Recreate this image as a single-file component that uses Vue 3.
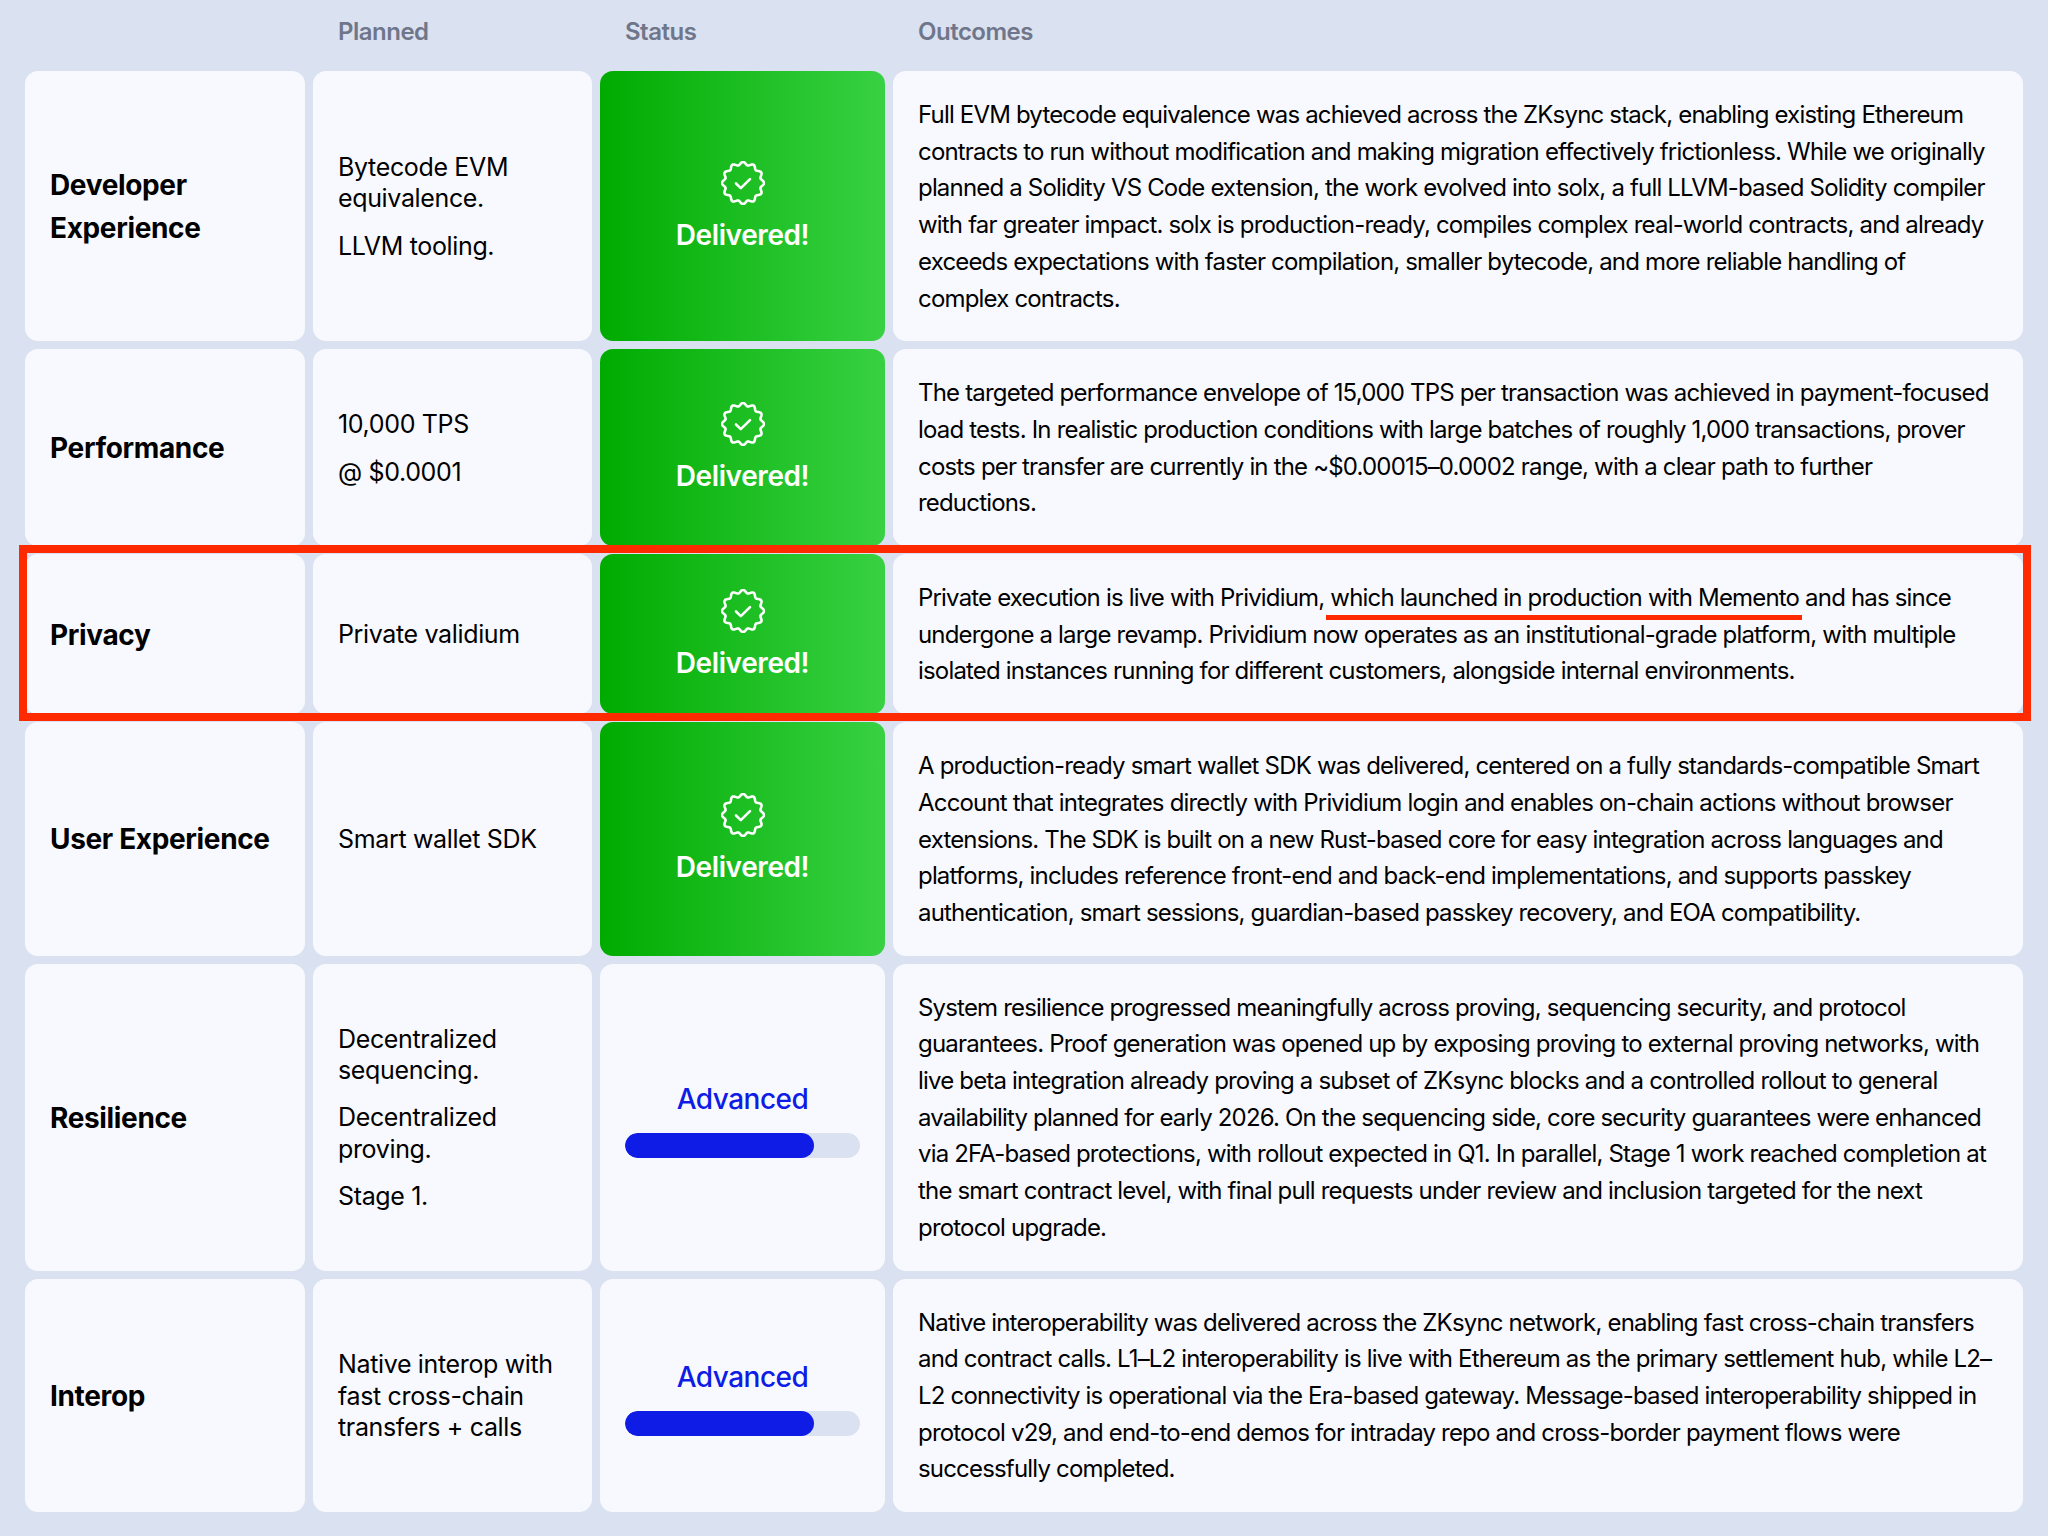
<script setup>
const pts = []
const N = 240
for (let i = 0; i < N; i++) {
  const t = (i / N) * Math.PI * 2
  const r = 19.6 + 1.5 * Math.cos(12 * t)
  pts.push((22 + r * Math.sin(t)).toFixed(2) + ' ' + (22 - r * Math.cos(t)).toFixed(2))
}
const badge = 'M' + pts.join('L') + 'Z'

const rows = [
  { name: ['Developer', 'Experience'], planned: ['Bytecode EVM equivalence.', 'LLVM tooling.'], done: true,
    text: 'Full EVM bytecode equivalence was achieved across the ZKsync stack, enabling existing Ethereum contracts to run without modification and making migration effectively frictionless. While we originally planned a Solidity VS Code extension, the work evolved into solx, a full LLVM-based Solidity compiler with far greater impact. solx is production-ready, compiles complex real-world contracts, and already exceeds expectations with faster compilation, smaller bytecode, and more reliable handling of complex contracts.' },
  { name: ['Performance'], planned: ['10,000 TPS', '@ $0.0001'], done: true,
    text: 'The targeted performance envelope of 15,000 TPS per transaction was achieved in payment-focused load tests. In realistic production conditions with large batches of roughly 1,000 transactions, prover costs per transfer are currently in the ~$0.00015–0.0002 range, with a clear path to further\nreductions.' },
  { name: ['Privacy'], planned: ['Private validium'], done: true, highlight: true,
    before: 'Private execution is live with Prividium, ', mark: 'which launched in production with Memento',
    text: ' and has since undergone a large revamp. Prividium now operates as an institutional-grade platform, with multiple isolated instances running for different customers, alongside internal environments.' },
  { name: ['User Experience'], planned: ['Smart wallet SDK'], done: true,
    text: 'A production-ready smart wallet SDK was delivered, centered on a fully standards-compatible Smart Account that integrates directly with Prividium login and enables on-chain actions without browser extensions. The SDK is built on a new Rust-based core for easy integration across languages and platforms, includes reference front-end and back-end implementations, and supports passkey authentication, smart sessions, guardian-based passkey recovery, and EOA compatibility.' },
  { name: ['Resilience'], planned: ['Decentralized sequencing.', 'Decentralized proving.', 'Stage 1.'], done: false,
    text: 'System resilience progressed meaningfully across proving, sequencing security, and protocol guarantees. Proof generation was opened up by exposing proving to external proving networks, with live beta integration already proving a subset of ZKsync blocks and a controlled rollout to general availability planned for early 2026. On the sequencing side, core security guarantees were enhanced via 2FA-based protections, with rollout expected in Q1. In parallel, Stage 1 work reached completion at the smart contract level, with final pull requests under review and inclusion targeted for the next protocol upgrade.' },
  { name: ['Interop'], planned: ['Native interop with fast cross-chain transfers + calls'], done: false,
    text: 'Native interoperability was delivered across the ZKsync network, enabling fast cross-chain transfers and contract calls. L1–L2 interoperability is live with Ethereum as the primary settlement hub, while L2–L2 connectivity is operational via the Era-based gateway. Message-based interoperability shipped in protocol v29, and end-to-end demos for intraday repo and cross-border payment flows were successfully completed.' }
]
</script>

<template>
  <div class="page">
    <div class="row head">
      <div></div>
      <div class="h">Planned</div>
      <div class="h">Status</div>
      <div class="h">Outcomes</div>
    </div>
    <div v-for="r in rows" :key="r.name[0]" class="row" :class="{ hl: r.highlight }">
      <div class="cell name"><div v-for="n in r.name" :key="n">{{ n }}</div></div>
      <div class="cell planned"><p v-for="p in r.planned" :key="p">{{ p }}</p></div>
      <div v-if="r.done" class="cell status done">
        <svg width="44" height="44" viewBox="0 0 44 44" fill="none" stroke="#fff" stroke-width="2.6" stroke-linecap="round" stroke-linejoin="round">
          <path :d="badge" />
          <path d="M15 22.5l4.8 4.6 9.2-9" />
        </svg>
        <span>Delivered!</span>
      </div>
      <div v-else class="cell status adv">
        <span>Advanced</span>
        <div class="bar"><div class="fill"></div></div>
      </div>
      <div class="cell outcome"><template v-if="r.mark">{{ r.before }}<span class="mark">{{ r.mark }}</span></template>{{ r.text }}</div>
    </div>
  </div>
</template>

<style>
html, body { margin: 0; background: #dae1f0; }
</style>

<style scoped>
.page {
  width: 2048px;
  min-height: 1536px;
  box-sizing: border-box;
  padding: 0 25px;
  background: #dae1f0;
  display: flex;
  flex-direction: column;
  gap: 8px;
  font-family: Inter, "Liberation Sans", sans-serif;
  color: #000;
}
.row {
  display: grid;
  grid-template-columns: 280px 279px 285px 1fr;
  gap: 8px;
  position: relative;
}
.head { height: 63px; align-items: center; }
.h {
  font-size: 24px;
  font-weight: 600;
  color: #70768a;
  padding-left: 25px;
  letter-spacing: -0.5px;
}
.cell {
  background: #f8f9fe;
  border-radius: 13px;
  box-sizing: border-box;
  padding: 25px;
  display: flex;
  flex-direction: column;
  justify-content: center;
}
.name {
  font-size: 28px;
  font-weight: 700;
  line-height: 43px;
  letter-spacing: -0.35px;
  padding-top: 26px;
  padding-bottom: 24px;
}
.planned {
  font-size: 25px;
  line-height: 31.4px;
  gap: 16px;
  letter-spacing: -0.35px;
  padding-top: 26px;
  padding-bottom: 24px;
}
.planned p { margin: 0; }
.status { align-items: center; }
.done {
  background: linear-gradient(90deg, #00ab00, #38d143);
  color: #fff;
  font-size: 28px;
  font-weight: 600;
  gap: 13px;
  letter-spacing: -0.4px;
}
.adv {
  color: #0f1ce6;
  font-size: 28px;
  font-weight: 500;
  gap: 17px;
  letter-spacing: -0.5px;
  padding-top: 30px;
}
.bar {
  width: 100%;
  height: 25px;
  border-radius: 13px;
  background: #dae1f0;
  overflow: hidden;
}
.fill {
  width: 80.5%;
  height: 100%;
  border-radius: 13px;
  background: #0f1ce6;
}
.outcome {
  display: block;
  font-size: 24px;
  line-height: 36.7px;
  letter-spacing: -0.82px;
  white-space: pre-line;
  padding-top: 26px;
  padding-bottom: 24px;
}
.mark { position: relative; }
.mark::after {
  content: "";
  position: absolute;
  left: -4px;
  right: -3px;
  bottom: -8px;
  height: 5px;
  background: #ff2a00;
}
.hl::after {
  content: "";
  position: absolute;
  inset: -9px -8px -7px -6px;
  border: 8px solid #ff2a00;
  pointer-events: none;
}
</style>
